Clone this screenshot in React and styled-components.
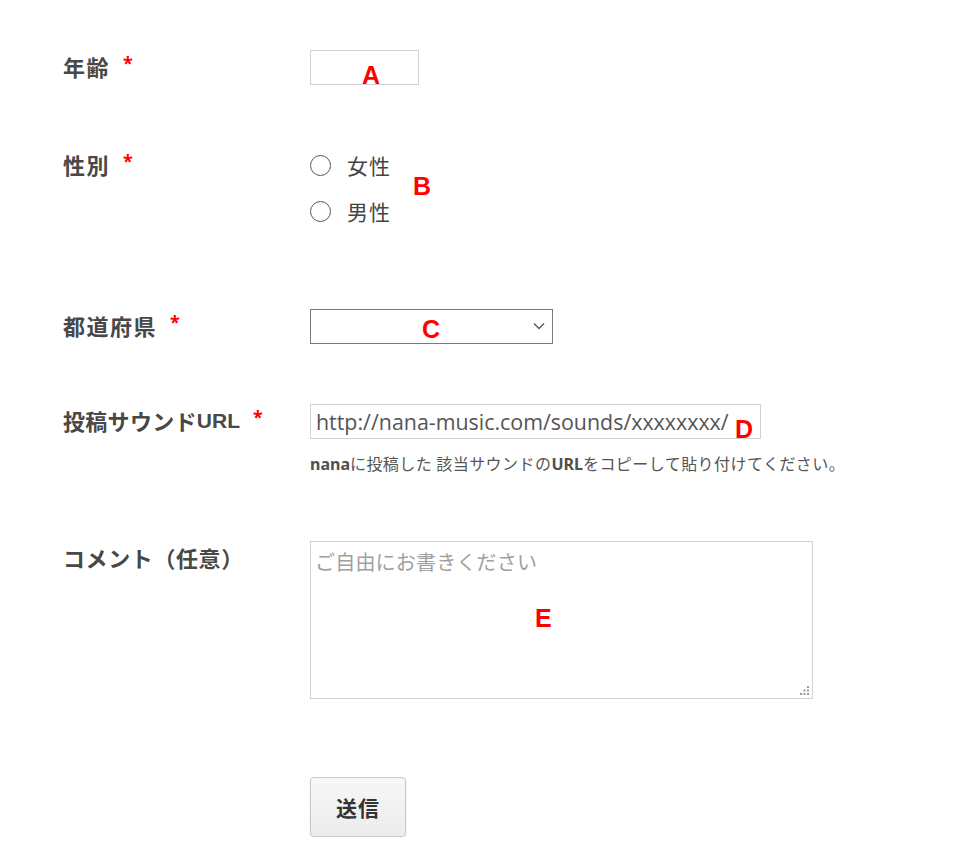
import React from "react";
import styled, { createGlobalStyle } from "styled-components";

const GlobalStyle = createGlobalStyle`
  body {
    margin: 0;
    background: #fff;
    font-family: "Noto Sans", "Noto Sans CJK JP", sans-serif;
  }
`;

const Page = styled.form`
  padding: 50px 0 0 63px;
  width: 960px;
  box-sizing: border-box;
`;

const Row = styled.div`
  display: grid;
  grid-template-columns: 247px 1fr;
  align-items: start;
  margin-bottom: ${(p) => p.gap || 0}px;
`;

const Label = styled.label`
  font-family: "Noto Sans", "Noto Sans CJK JP", sans-serif;
  font-size: 22px;
  font-weight: 700;
  letter-spacing: ${(p) => p.spacing ?? 1.5}px;
  line-height: 34px;
  color: #484848;
  display: flex;
  align-items: center;

  em {
    font-style: normal;
    font-family: "Liberation Sans", Arial, sans-serif;
    font-size: 21px;
    letter-spacing: 0;
  }
`;

const Star = styled.span`
  color: #f00;
  font-size: 18px;
  margin-left: 13px;
  line-height: 1;
  position: relative;
  top: -4px;
`;

const Field = styled.div`
  position: relative;
  width: fit-content;
`;

const Note = styled.span`
  position: absolute;
  color: #f00;
  font-family: "Liberation Sans", Arial, sans-serif;
  font-weight: 700;
  font-size: 25px;
  line-height: 1;
  left: ${(p) => p.x}px;
  top: ${(p) => p.y}px;
  pointer-events: none;
`;

const TextBox = styled.input`
  display: block;
  box-sizing: border-box;
  width: ${(p) => p.w}px;
  height: 35px;
  border: 1px solid #d2d2d2;
  padding: 0 5px;
  font-family: "Open Sans", "Noto Sans CJK JP", sans-serif;
  font-size: 21.4px;
  color: #555;
  background: #fff;
  outline: none;
`;

const Radios = styled.div`
  display: flex;
  flex-direction: column;
  gap: 12px;
`;

const RadioLine = styled.label`
  display: flex;
  align-items: center;
  height: 34px;
  gap: 16px;
  font-family: "Noto Sans CJK JP", sans-serif;
  font-size: 21px;
  letter-spacing: 1px;
  color: #444;
`;

const Radio = styled.input`
  appearance: none;
  margin: 0;
  width: 21px;
  height: 21px;
  border: 1.5px solid #555;
  border-radius: 50%;
  background: #fff;
  box-sizing: border-box;
`;

const SelectWrap = styled.div`
  position: relative;
  width: 243px;
`;

const Select = styled.select`
  appearance: none;
  display: block;
  width: 100%;
  height: 35px;
  box-sizing: border-box;
  border: 1px solid #7a7a7a;
  border-radius: 0;
  background: #fff;
  font-size: 18px;
  outline: none;
`;

const Chevron = styled.svg`
  position: absolute;
  right: 8px;
  top: 13px;
  pointer-events: none;
`;

const Help = styled.p`
  margin: 12px 0 0;
  font-family: "Noto Sans CJK JP", sans-serif;
  font-size: 16px;
  letter-spacing: 0.45px;
  line-height: 24px;
  color: #555;
  white-space: nowrap;

  b {
    font-family: "Noto Sans", sans-serif;
    font-weight: 700;
    color: #505050;
    letter-spacing: 0;
  }
`;

const Area = styled.textarea`
  display: block;
  box-sizing: border-box;
  width: 503px;
  height: 158px;
  border: 1px solid #d2d2d2;
  padding: 6px 4px;
  resize: none;
  outline: none;
  font-family: "Noto Sans CJK JP", sans-serif;
  font-size: 20px;
  line-height: 28px;
  color: #555;

  &::placeholder {
    color: #a0a0a0;
    letter-spacing: 0.2px;
  }
`;

const Grip = styled.svg`
  position: absolute;
  right: 3px;
  bottom: 3px;
`;

const Button = styled.button`
  grid-column: 2;
  width: 96px;
  height: 60px;
  border: 1px solid #c9c9c9;
  border-radius: 4px;
  background: linear-gradient(#f7f7f7, #ececec);
  box-shadow: 0 1px 2px rgba(0, 0, 0, 0.12);
  font-family: "Noto Sans CJK JP", sans-serif;
  font-size: 21px;
  font-weight: 700;
  letter-spacing: 1px;
  color: #333;
  cursor: pointer;
`;

export default function App() {
  return (
    <>
      <GlobalStyle />
      <Page onSubmit={(e) => e.preventDefault()}>
        <Row gap={63}>
          <Label>
            年齢<Star>*</Star>
          </Label>
          <Field>
            <TextBox w={109} />
            <Note x={52} y={13}>A</Note>
          </Field>
        </Row>

        <Row gap={81}>
          <Label>
            性別<Star>*</Star>
          </Label>
          <Field>
            <Radios>
              <RadioLine>
                <Radio type="radio" name="sex" />
                女性
              </RadioLine>
              <RadioLine>
                <Radio type="radio" name="sex" />
                男性
              </RadioLine>
            </Radios>
            <Note x={103} y={26}>B</Note>
          </Field>
        </Row>

        <Row gap={60}>
          <Label>
            都道府県<Star>*</Star>
          </Label>
          <Field>
            <SelectWrap>
              <Select defaultValue="">
                <option value=""></option>
              </Select>
              <Chevron width="12" height="8" viewBox="0 0 12 8">
                <polyline points="1,1.5 6,6.5 11,1.5" fill="none" stroke="#555" strokeWidth="1.3" />
              </Chevron>
            </SelectWrap>
            <Note x={112} y={8}>C</Note>
          </Field>
        </Row>

        <Row gap={65}>
          <Label spacing={0.3}>
            投稿サウンド<em>URL</em>
            <Star>*</Star>
          </Label>
          <Field>
            <TextBox w={451} defaultValue="http://nana-music.com/sounds/xxxxxxxx/" />
            <Note x={425} y={13}>D</Note>
            <Help>
              <b>nana</b>に投稿した 該当サウンドの<b>URL</b>をコピーして貼り付けてください。
            </Help>
          </Field>
        </Row>

        <Row gap={78}>
          <Label spacing={0.6}>コメント（任意）</Label>
          <Field>
            <Area placeholder="ご自由にお書きください" />
            <Grip width="10" height="10" viewBox="0 0 10 10">
              <rect x="7" y="0" width="2" height="2" fill="#999" />
              <rect x="7" y="3.5" width="2" height="2" fill="#999" />
              <rect x="3.5" y="3.5" width="2" height="2" fill="#999" />
              <rect x="7" y="7" width="2" height="2" fill="#999" />
              <rect x="3.5" y="7" width="2" height="2" fill="#999" />
              <rect x="0" y="7" width="2" height="2" fill="#999" />
            </Grip>
            <Note x={225} y={65}>E</Note>
          </Field>
        </Row>

        <Row>
          <Button type="submit">送信</Button>
        </Row>
      </Page>
    </>
  );
}
